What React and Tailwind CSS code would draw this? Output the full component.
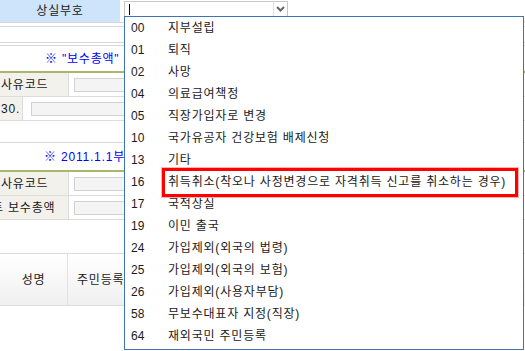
const codes = [
  ['00', '지부설립'],
  ['01', '퇴직'],
  ['02', '사망'],
  ['04', '의료급여책정'],
  ['05', '직장가입자로 변경'],
  ['10', '국가유공자 건강보험 배제신청'],
  ['13', '기타'],
  ['16', '취득취소(착오나 사정변경으로 자격취득 신고를 취소하는 경우)'],
  ['17', '국적상실'],
  ['19', '이민 출국'],
  ['24', '가입제외(외국의 법령)'],
  ['25', '가입제외(외국의 보험)'],
  ['26', '가입제외(사용자부담)'],
  ['58', '무보수대표자 지정(직장)'],
  ['64', '재외국민 주민등록'],
]

function FieldRow({ label, labelW, inputX, labelClass = '' }) {
  return (
    <div className="flex h-[24px] border-b border-[#dcdcdc]">
      <div
        className={`shrink-0 bg-[#f2f1ec] border-r border-[#dcdcdc] flex items-center overflow-hidden whitespace-nowrap ${labelClass}`}
        style={{ width: labelW }}
      >
        {label}
      </div>
      <div className="flex items-center" style={{ paddingLeft: inputX }}>
        <div className="w-[300px] h-[14px] bg-[#f4f4f4] border border-[#d2d2d2]" />
      </div>
    </div>
  )
}

export default function App() {
  return (
    <div
      className="relative w-[525px] h-[351px] overflow-hidden bg-white text-[12px] tracking-[0.8px] text-[#1a1a1a]"
      style={{ fontFamily: '"Liberation Sans", "Noto Sans CJK KR", sans-serif' }}
    >
      {/* header row */}
      <div className="flex h-[23px] border-b border-[#d8d8d8]">
        <div className="w-[120px] bg-[#cde4fa] flex items-center justify-center">상실부호</div>
        <div className="pl-[4px] pt-[1px]">
          <div className="flex w-[164px] h-[16px] border border-[#c8c8c8] bg-white">
            <div className="flex-1 flex items-center pl-[4px]">
              <div className="w-px h-[11px] bg-black" />
            </div>
            <div className="w-[14px] border-l border-[#e0e0e0] flex items-center justify-center">
              <svg width="9" height="6" viewBox="0 0 9 6">
                <path d="M1 1 L4.5 4.5 L8 1" stroke="#666" strokeWidth="2" fill="none" />
              </svg>
            </div>
          </div>
        </div>
      </div>
      <div className="h-[3px]" />
      <div className="h-[17px] border-y border-[#d8d8d8]" />
      <div className="h-[3px] border-b border-[#d8d8d8]" />

      {/* first block */}
      <div className="h-[25px] flex items-center pl-[45px] text-[#0000ff] whitespace-nowrap">
        ※ "보수총액" 은 당해연도 보수총액을 입력합니다.
      </div>
      <div className="h-[2px] bg-[#a9b76d]" />
      <FieldRow label="사유코드" labelW={69} inputX={5} labelClass="pl-[1px]" />
      <FieldRow label="30." labelW={23} inputX={8} labelClass="pl-[1px]" />

      <div className="h-[22px] border-b border-[#d8d8d8]" />
      <div className="h-[27px] flex items-center pl-[44px] text-[#0000ff] whitespace-nowrap">
        ※ 2011.1.1부터 보수총액을 신고합니다.
      </div>
      <div className="h-[2px] bg-[#a9b76d]" />
      <FieldRow label="사유코드" labelW={69} inputX={5} labelClass="pl-[1px]" />
      <FieldRow label={<span className="ml-[-8px]">트 보수총액</span>} labelW={69} inputX={5} />

      <div className="h-[33px]" />
      <div className="flex h-[53px] border-y border-[#dcdcdc] bg-gradient-to-b from-white to-[#f0f0f0]">
        <div className="w-[68px] border-r border-[#e2e2e2] flex items-center justify-center">성명</div>
        <div className="w-[110px] border-r border-[#e2e2e2] flex items-center pl-[9px]">주민등록번호</div>
        <div className="flex-1" />
      </div>

      {/* dropdown list */}
      <div className="absolute left-[124px] top-[16px] w-[400px] h-[334px] bg-white border border-[#3f74b3]">
        {codes.map(([code, name]) => (
          <div key={code} className="flex items-center h-[22px] whitespace-nowrap">
            <div className="w-[43px] pl-[6px] tracking-normal">{code}</div>
            <div>{name}</div>
          </div>
        ))}
        <div className="absolute left-[37px] top-[151px] w-[356px] h-[29px] border-[3px] border-[#ff0000] shadow-[0_0_0_1px_#ffb4b4]" />
      </div>
    </div>
  )
}
